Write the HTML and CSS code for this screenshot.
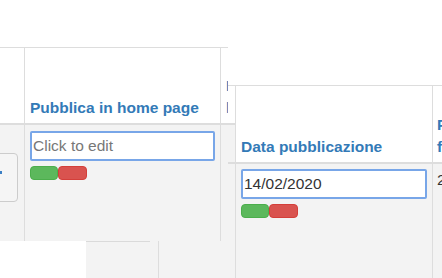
FILE: index.html
```html
<!DOCTYPE html>
<html lang="it">
<head>
  <meta charset="UTF-8">
  <title>Tabella notizie</title>
  <link rel="stylesheet" href="styles.css">
</head>
<body>
  <div class="canvas">

    <!-- tabella sullo sfondo -->
    <div class="layer back">
      <div class="back-cell"><div class="back-edge"></div></div>
    </div>

    <!-- prima tabella -->
    <div class="layer grid-a">
      <div class="row head">
        <div class="cell c-first"></div>
        <div class="cell c-main"><span class="th">Pubblica in home page</span></div>
        <div class="cell c-next"><span class="th clip">In<br>lista</span></div>
      </div>
      <div class="row body">
        <div class="cell c-first">
          <button class="side-btn"><span class="side-ico"></span></button>
        </div>
        <div class="cell c-main">
          <input class="edit" type="text" placeholder="Click to edit">
          <div class="actions"><span class="ok"></span><span class="no"></span></div>
        </div>
        <div class="cell c-next"></div>
      </div>
    </div>

    <!-- seconda tabella -->
    <div class="layer grid-b">
      <div class="row head">
        <div class="cell c-gap"></div>
        <div class="cell c-main"><span class="th">Data pubblicazione</span></div>
        <div class="cell c-next"><span class="th">Pubblica<br>fino al</span></div>
      </div>
      <div class="row body">
        <div class="cell c-gap"></div>
        <div class="cell c-main">
          <input class="edit" type="text" value="14/02/2020">
          <div class="actions"><span class="ok"></span><span class="no"></span></div>
        </div>
        <div class="cell c-next"><span class="td">28/02/2020</span></div>
      </div>
    </div>

  </div>
</body>
</html>
```

FILE: styles.css
```css
* {
  box-sizing: border-box;
}
body {
  margin: 0;
  width: 442px;
  height: 278px;
  overflow: hidden;
  background-color: #fff;
  font-family: "Liberation Sans", Arial, sans-serif;
  font-size: 15.5px;
  line-height: 22px;
  color: #333;
}
.canvas {
  position: relative;
  width: 442px;
  height: 278px;
}
.layer {
  position: absolute;
}

/* sfondo */
.back {
  left: 86px;
  top: 241px;
  width: 149px;
  height: 37px;
  background-color: #f3f3f3;
}
.back-cell {
  width: 73px;
  height: 100%;
  border-right: 1px solid #ddd;
}
.back-edge {
  width: 64px;
  border-top: 1px solid #dadada;
}

/* tabelle */
.grid-a {
  left: 0;
  top: 47px;
  width: 235px;
  height: 194px;
  display: flex;
  flex-direction: column;
}
.grid-b {
  left: 228px;
  top: 85px;
  width: 214px;
  height: 193px;
  display: flex;
  flex-direction: column;
}
.row {
  display: flex;
}
.head {
  border-bottom: 2px solid #ddd;
}
.grid-a .head {
  height: 78px;
  padding-top: 1px;
  background: linear-gradient(#ddd, #ddd) 0 0 / 228px 1px no-repeat;
}
.grid-b .head {
  height: 79px;
  border-top: 1px solid #ddd;
}
.body {
  flex: 1;
  background-color: #f3f3f3;
}
.cell {
  flex-shrink: 0;
  padding: 0 5px;
  border-right: 1px solid #ddd;
}
.head .cell {
  display: flex;
  align-items: flex-end;
  padding-bottom: 4px;
  background-color: #fff;
}
.head .c-gap {
  background-color: transparent;
}
.grid-a .body .cell {
  padding-top: 6px;
}
.grid-b .body .cell {
  padding-top: 5px;
}
.c-first {
  width: 25px;
  padding: 0;
}
.grid-a .c-main {
  width: 196px;
}
.grid-b .c-main {
  width: 197px;
}
.c-gap {
  width: 8px;
  padding: 0;
}
.c-next {
  flex: 1;
  border-right: none;
  overflow: hidden;
  white-space: nowrap;
}
.grid-b .c-next {
  padding-left: 4px;
}
.th {
  font-weight: bold;
  color: #337ab7;
}
.clip {
  display: block;
  width: 2px;
  overflow: hidden;
}
.td {
  color: #333;
}

/* pulsante laterale */
.grid-a .body .c-first {
  padding-top: 28px;
}
.side-btn {
  display: flex;
  align-items: flex-start;
  width: 57px;
  height: 49px;
  margin-left: -39px;
  padding: 17px 0 0 38px;
  background-color: #f5f5f5;
  border: 1px solid #ccc;
  border-radius: 4px;
}
.side-ico {
  width: 2px;
  height: 3px;
  background-color: #3b7fc4;
}

/* campo modificabile */
.edit {
  display: block;
  width: 100%;
  height: 30px;
  margin: 0;
  padding: 0 1px;
  border: 2px solid #78a6e8;
  border-radius: 2px;
  background-color: #fff;
  font-family: "Liberation Sans", Arial, sans-serif;
  font-size: 15.5px;
  color: #333;
  outline: none;
}
.edit::placeholder {
  color: #777;
  opacity: 1;
}
.actions {
  display: flex;
  margin-top: 5px;
}
.ok, .no {
  height: 14px;
  border-radius: 4px;
}
.ok {
  width: 28px;
  background-color: #5cb85c;
  border: 1px solid #4cae4c;
}
.no {
  width: 29px;
  background-color: #d9534f;
  border: 1px solid #d43f3a;
}
```
